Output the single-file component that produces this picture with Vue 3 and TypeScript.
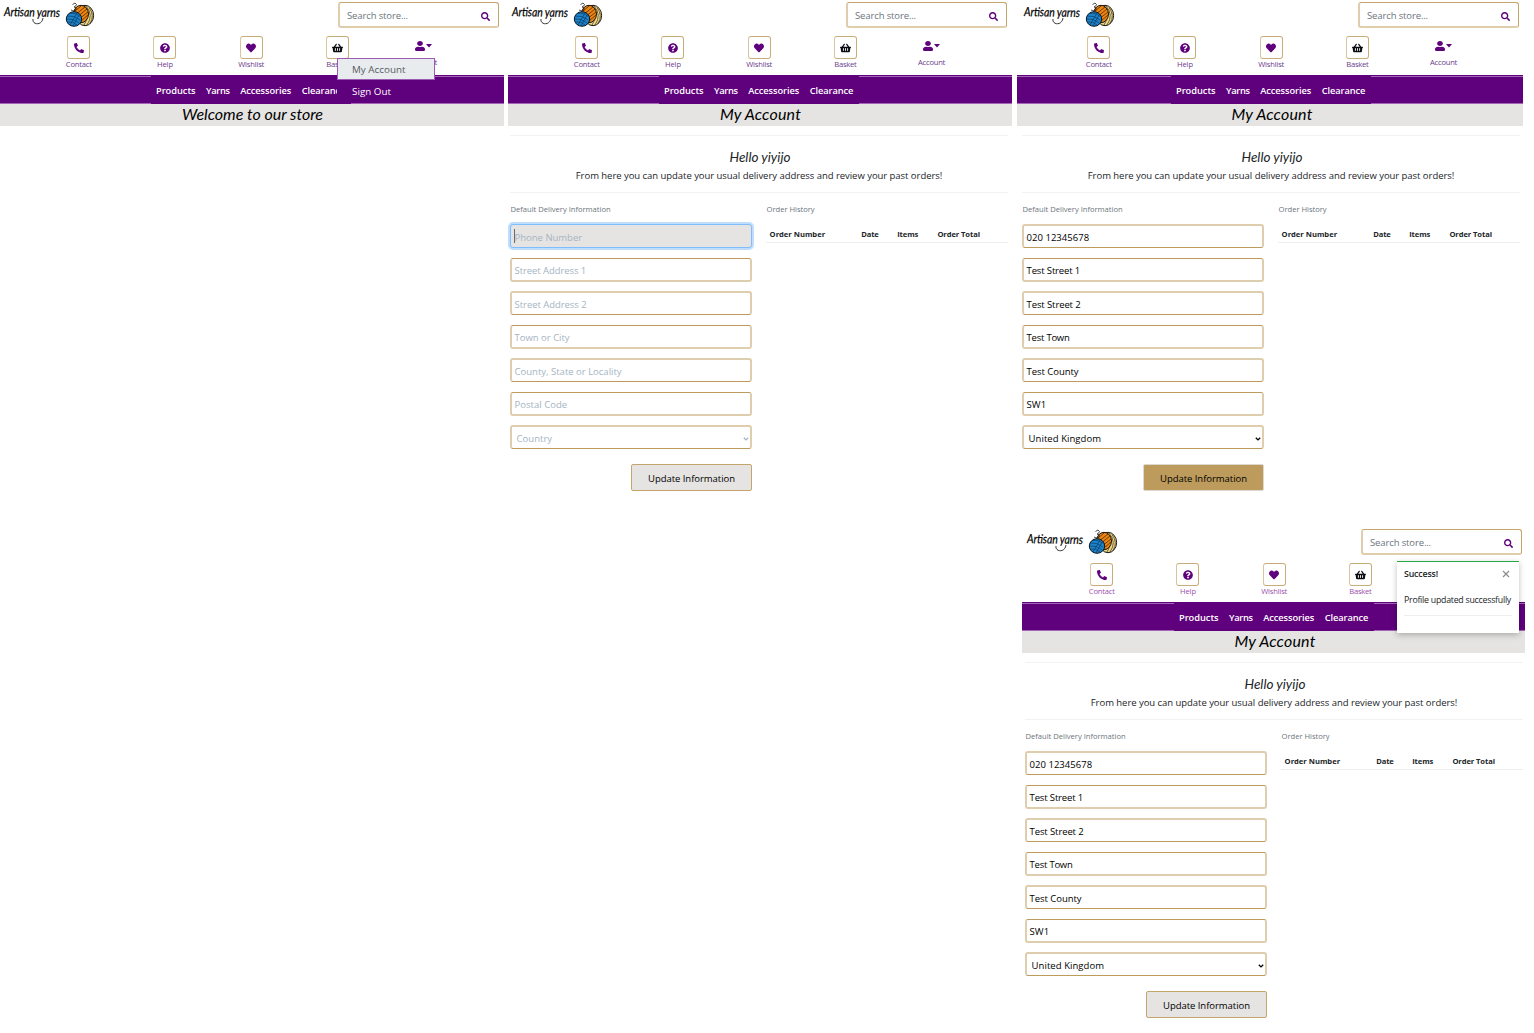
<script setup lang="ts">
import type { Directive } from 'vue'

interface Field { hint: string; value: string; edge: 'sharp-top' | 'sharp-bottom'; hw: number; vw: number }
interface Panel {
  id: string
  title: string
  menu?: boolean
  profile?: boolean
  filled?: boolean
  hover?: boolean
  toast?: boolean
}

// Spreads the letters of an element so its text is exactly `value` px wide.
const vFit: Directive<HTMLElement, number> = {
  mounted(el, { value }) {
    const range = document.createRange()
    range.selectNodeContents(el)
    const width = range.getBoundingClientRect().width
    const count = (el.textContent ?? '').trim().length
    el.style.letterSpacing = `${((value - width) / count).toFixed(4)}px`
  },
}

const panels: Panel[] = [
  { id: 'home', title: 'Welcome to our store', menu: true },
  { id: 'empty', title: 'My Account', profile: true },
  { id: 'filled', title: 'My Account', profile: true, filled: true, hover: true },
  { id: 'saved', title: 'My Account', profile: true, filled: true, toast: true },
]

const nav = [
  { name: 'Products', w: 39.5 },
  { name: 'Yarns', w: 23.5 },
  { name: 'Accessories', w: 51 },
  { name: 'Clearance', w: 43.5 },
]

const tools = [
  { name: 'Contact', w: 26, color: '#5f007c', d: 'M493.4 24.6l-104-24c-11.3-2.6-22.900 3.300-27.500 13.900l-48 112c-4.200 9.800-1.400 21.300 6.900 28l60.600 49.600c-36 76.700-98.900 140.500-177.200 177.200l-49.600-60.600c-6.800-8.300-18.200-11.100-28-6.900l-112 48C3.900 366.500-2 378.100.6 389.400l24 104C27.100 504.200 36.700 512 48 512c256.100 0 464-207.500 464-464 0-11.200-7.700-20.900-18.600-23.400z', flip: true },
  { name: 'Help', w: 16, color: '#5f007c', d: 'M504 256c0 136.997-111.043 248-248 248S8 392.997 8 256C8 119.083 119.043 8 256 8s248 111.083 248 248zM262.655 90c-54.497 0-89.255 22.957-116.549 63.758-3.536 5.286-2.353 12.415 2.715 16.258l34.699 26.310c5.205 3.947 12.621 3.008 16.665-2.122 17.864-22.658 30.113-35.797 57.303-35.797 20.429 0 45.698 13.148 45.698 32.958 0 14.976-12.363 22.667-32.534 33.976C247.128 238.528 216 254.941 216 296v4c0 6.627 5.373 12 12 12h56c6.627 0 12-5.373 12-12v-1.333c0-28.462 83.186-29.647 83.186-106.667 0-58.002-60.165-102-116.531-102zM256 338c-25.365 0-46 20.635-46 46 0 25.364 20.635 46 46 46s46-20.636 46-46c0-25.365-20.635-46-46-46z' },
  { name: 'Wishlist', w: 26, color: '#5f007c', d: 'M462.300 62.600C407.500 15.900 326 24.300 275.700 76.200L256 96.500l-19.700-20.300C186.100 24.300 104.500 15.900 49.700 62.600c-62.800 53.600-66.100 149.800-9.900 207.900l193.500 199.800c12.500 12.900 32.800 12.900 45.300 0l193.500-199.800c56.300-58.100 53-154.300-9.800-207.900z' },
  { name: 'Basket', w: 22, color: '#0b0b12', d: 'M576 216v16c0 13.255-10.745 24-24 24h-8l-26.113 182.788C514.509 462.435 494.257 480 470.370 480H105.630c-23.887 0-44.139-17.565-47.518-41.212L32 256h-8c-13.255 0-24-10.745-24-24v-16c0-13.255 10.745-24 24-24h67.341l106.780-146.821c10.395-14.292 30.407-17.453 44.701-7.058 14.293 10.395 17.453 30.408 7.058 44.701L170.477 192h235.046L326.120 82.821c-10.395-14.292-7.234-34.306 7.059-44.701 14.291-10.395 34.306-7.235 44.701 7.058L484.659 192H552c13.255 0 24 10.745 24 24zM312 392V280c0-13.255-10.745-24-24-24s-24 10.745-24 24v112c0 13.255 10.745 24 24 24s24-10.745 24-24zm112 0V280c0-13.255-10.745-24-24-24s-24 10.745-24 24v112c0 13.255 10.745 24 24 24s24-10.745 24-24zm-224 0V280c0-13.255-10.745-24-24-24s-24 10.745-24 24v112c0 13.255 10.745 24 24 24s24-10.745 24-24z', wide: true },
]

const fields: Field[] = [
  { hint: 'Phone Number', value: '020 12345678', edge: 'sharp-bottom', hw: 67.5, vw: 62.5 },
  { hint: 'Street Address 1', value: 'Test Street 1', edge: 'sharp-top', hw: 71.5, vw: 53.5 },
  { hint: 'Street Address 2', value: 'Test Street 2', edge: 'sharp-bottom', hw: 72, vw: 54 },
  { hint: 'Town or City', value: 'Test Town', edge: 'sharp-top', hw: 55, vw: 43 },
  { hint: 'County, State or Locality', value: 'Test County', edge: 'sharp-bottom', hw: 107, vw: 52 },
  { hint: 'Postal Code', value: 'SW1', edge: 'sharp-top', hw: 52.5, vw: 19.5 },
]

const columns = [
  { name: 'Order Number', w: 55.5, col: 91.6 },
  { name: 'Date', w: 17.5, col: 36 },
  { name: 'Items', w: 21, col: 40.2 },
  { name: 'Order Total', w: 42.5, col: 70 },
]
</script>

<template>
  <main class="board">
    <section v-for="p in panels" :key="p.id" class="panel" :class="p.id">
      <header class="top">
        <svg class="logo" viewBox="0 0 92 26" width="92" height="26">
          <g transform="rotate(1 28 12)">
            <text x="1" y="14.500" textLength="56" lengthAdjust="spacingAndGlyphs" class="brand">Artisan yarns</text>
          </g>
          <path d="M30 17c-1 6 9 7 10-1" fill="none" stroke="#222" stroke-width=".9" />
          <ellipse cx="82" cy="13.500" rx="8.600" ry="10.200" fill="#f0d98a" stroke="#15130c" stroke-width="1" />
          <path d="M83 4q8 9 1 19M86 5.500q6 8 1 16M80 4q8 9 1 19" fill="none" stroke="#3a331c" stroke-width=".7" />
          <ellipse cx="78" cy="12" rx="7.500" ry="8.700" fill="#ee8511" stroke="#15130c" stroke-width="1" />
          <path d="M71 10l7-6M72 13l10-8M74 15l10-8M76 17l9-7M78 19l7-6" stroke="#4d2704" stroke-width=".8" />
          <ellipse cx="71" cy="17" rx="7.700" ry="7.300" fill="#1e83c9" stroke="#0b1520" stroke-width="1" />
          <path d="M64 14q7-1 13 4M64 17q6-1 12 4M65 20q5-1 9 3M66 11.500q7-1 11 3M67 23l7-12M70 24l6-11" fill="none" stroke="#093b66" stroke-width=".7" />
          <path d="M69.500 2.500q3-3 4 0q-.5 2-2.500 2.500q3 0 2 3q-3 2-5 0" fill="none" stroke="#222" stroke-width=".8" />
        </svg>
        <div class="search">
          <span v-fit="61">Search store...</span>
          <svg viewBox="0 0 512 512" width="9" height="9"><path fill="#5f007c" d="M505 442.700L405.300 343c-4.500-4.500-10.600-7-17-7H372c27.600-35.300 44-79.700 44-128C416 93.100 322.900 0 208 0S0 93.100 0 208s93.100 208 208 208c48.300 0 92.700-16.400 128-44v16.300c0 6.400 2.500 12.500 7 17l99.700 99.700c9.400 9.400 24.600 9.400 33.900 0l28.300-28.300c9.400-9.400 9.400-24.600.1-34zM208 336c-70.700 0-128-57.200-128-128 0-70.700 57.200-128 128-128 70.700 0 128 57.200 128 128 0 70.700-57.200 128-128 128z" /></svg>
        </div>
      </header>

      <div class="tools">
        <div v-for="t in tools" :key="t.name" class="tool">
          <div class="box">
            <svg :viewBox="t.wide ? '0 0 576 512' : '0 0 512 512'" :width="t.wide ? 11 : 10" height="10" :class="{ flip: t.flip }">
              <path :d="t.d" :fill="t.color" />
            </svg>
          </div>
          <span class="caption" v-fit="t.w">{{ t.name }}</span>
        </div>
        <div class="tool account">
          <div class="who">
            <svg viewBox="0 0 448 512" width="10" height="10" preserveAspectRatio="none"><path fill="#5f007c" d="M224 256c70.700 0 128-57.300 128-128S294.700 0 224 0 96 57.300 96 128s57.300 128 128 128zm89.600 32h-16.700c-22.200 10.200-46.900 16-72.900 16s-50.600-5.800-72.900-16h-16.700C60.200 288 0 348.200 0 422.400V464c0 26.500 21.500 48 48 48h352c26.500 0 48-21.500 48-48v-41.600c0-74.200-60.200-134.400-134.400-134.400z" /></svg>
            <svg viewBox="0 0 6 4" width="6" height="4"><path fill="#5f007c" d="M0 0h6L3 3.400z" /></svg>
          </div>
          <span class="caption" v-fit="27">Account</span>
        </div>
      </div>

      <nav class="nav">
        <i class="rule left"></i>
        <ul><li v-for="n in nav" :key="n.name"><span v-fit="n.w">{{ n.name }}</span></li></ul>
        <i class="rule"></i>
      </nav>
      <h1 class="title"><span v-fit="p.menu ? 141 : 81">{{ p.title }}</span></h1>

      <div v-if="p.menu" class="menu">
        <div class="item active"><span v-fit="53.5">My Account</span></div>
        <div class="item"><span v-fit="39">Sign Out</span></div>
      </div>

      <div v-if="p.profile" class="profile">
        <div class="hello">
          <h2><span v-fit="61">Hello yiyijo</span></h2>
          <p><span v-fit="366.500">From here you can update your usual delivery address and review your past orders!</span></p>
        </div>
        <div class="columns">
          <div class="form">
            <div class="label"><span v-fit="100">Default Delivery Information</span></div>
            <div
              v-for="(f, i) in fields"
              :key="f.hint"
              class="field"
              :class="[f.edge, { hint: !p.filled, focus: i === 0 && !p.filled }]"
            >
              <span v-fit="p.filled ? f.vw : f.hw">{{ p.filled ? f.value : f.hint }}</span>
            </div>
            <div class="field select sharp-bottom" :class="{ hint: !p.filled }">
              <span v-fit="p.filled ? 72.5 : 35.5">{{ p.filled ? 'United Kingdom' : 'Country' }}</span>
              <svg viewBox="0 0 6 4" width="6" height="4"><path d="M.8.700L3 2.900 5.200.700" fill="none" stroke="currentColor" stroke-width="1.300" /></svg>
            </div>
            <div class="button" :class="{ hover: p.hover }"><span v-fit="87">Update Information</span></div>
          </div>
          <div class="history">
            <div class="label"><span v-fit="48">Order History</span></div>
            <div class="thead">
              <div v-for="c in columns" :key="c.name" class="th" :style="{ width: c.col + 'px' }"><span v-fit="c.w">{{ c.name }}</span></div>
            </div>
          </div>
        </div>
      </div>

      <div v-if="p.toast" class="toast">
        <div class="toast-head">
          <span v-fit="34">Success!</span>
          <svg viewBox="0 0 8 8" width="8" height="8"><path d="M1 1l6 6M7 1L1 7" stroke="#8b8b8b" stroke-width="1.200" /></svg>
        </div>
        <div class="toast-body"><span v-fit="107">Profile updated successfully</span></div>
      </div>
    </section>
  </main>
</template>

<style>
body { background: #fff; }
</style>

<style scoped>
.board {
  width: 1534px;
  height: 1033px;
  overflow: hidden;
  display: grid;
  grid-template-columns: 508px 512px 514px;
  grid-template-rows: 527px 506px;
  font-family: "Open Sans", "Noto Sans", sans-serif;
  font-size: 9.5px;
  line-height: 12px;
  color: #212529;
  white-space: nowrap;
}
.board * { box-sizing: border-box; }
.panel { position: relative; width: 504px; }
.saved { grid-column: 3; margin-left: 3px; }
.top { display: flex; justify-content: space-between; height: 36px; padding: 2px 5px 0 3px; }
.logo { display: block; }
.brand { font: italic 400 12.500px "Lato", sans-serif; fill: #000; stroke: #000; stroke-width: .25px; }
.search {
  display: flex; align-items: center; justify-content: space-between;
  width: 161px; height: 26px; padding: 2px 8.500px 0 7px;
  border: 1px solid #c4a56c; border-left: 2px solid #dfcdab; border-bottom: 2px solid #dfcdab; border-radius: 3px;
  color: #6c757d;
}
.search svg { margin-top: 1px; }
.tools { display: flex; height: 39px; padding-left: 35.700px; }
.tool { display: flex; flex-direction: column; align-items: center; width: 86.200px; }
.box {
  display: flex; align-items: center; justify-content: center;
  width: 23px; height: 23px; border: 1px solid #c9ad79; border-left-color: #d9c49c; border-radius: 3px;
}
.box svg, .who svg { display: block; }
.flip { transform: scaleX(-1); }
.caption { font-size: 7.600px; line-height: 10px; color: #6b3d8c; }
.saved .caption { color: #9a50ad; }
.who { display: flex; align-items: center; gap: 1px; height: 21px; padding-bottom: 1px; }
.nav { display: flex; height: 29px; background: #5f007c; overflow: hidden; }
.rule { flex: none; width: 155px; margin-top: 1px; height: 28px; border: solid #a366b5; border-width: 1px 0; }
.rule.left { width: 151px; }
.nav ul {
  display: flex; gap: 10.600px; flex: none; width: 200px; margin: 0; padding: 10px 0 0 5px; list-style: none;
  color: #fff; font-size: 9.300px; font-weight: 600;
}
.title {
  display: flex; justify-content: center; height: 22px; margin: 0; background: #e5e4e2;
  font: italic 400 16px/20px "Lato", sans-serif; color: #000; padding-left: 1px;
}
.filled .nav, .filled .title { margin-left: -3px; margin-right: 1px; }
.filled .rule.left { width: 154px; }
.filled .title { padding-left: 4px; }
.saved .nav, .saved .title { margin-left: -1px; margin-right: 2px; }
.saved .rule.left { width: 152px; }
.saved .title { padding-left: 3px; }
.menu { position: absolute; left: 337px; top: 58px; width: 98px; height: 45px; background: #5f007c; color: #fff; font-size: 9.800px; }
.item { height: 22px; padding: 6px 0 0 15px; }
.item.active { background: #e9ecef; border: 1px solid #9c5cb4; padding: 5px 0 0 14px; color: #565b60; }
.profile { padding: 9px 4px 0 2px; }
.hello { height: 58px; border: solid #f2f2f2; border-width: 1px 0; text-align: center; }
.hello h2 { margin: 11px 0 0; font: italic 400 13.500px/20px "Lato", sans-serif; padding-left: 2px; }
.hello p { margin: 2px 0 0; line-height: 14px; }
.columns { display: flex; justify-content: space-between; }
.form, .history { width: 242px; }
.label { height: 31px; padding: 10px 0 0 .6px; font-size: 7.600px; color: #6c757d; }
.field {
  position: relative;
  display: flex; align-items: center; height: 24px; margin-bottom: 9.500px; padding: 3px 0 0 2.600px;
  border: 2px solid #dfceae; border-radius: 3px; color: #000;
}
.sharp-top { border-top: 1px solid #bd9b5c; }
.sharp-bottom { border-bottom: 1px solid #bd9b5c; }
.hint { color: #a5b4c2; }
.focus { background: #e5e4e2; border: 1px solid #80bdff; padding-left: 3.600px; box-shadow: 0 0 0 2px #bfdeff; }
.focus::before { content: ""; position: absolute; left: 3px; top: 4px; width: 1px; height: 14px; background: #6b6b6b; }
.select { justify-content: space-between; padding: 2px 1px 0 4.600px; }
.button {
  display: flex; align-items: center; justify-content: center; width: 121px; height: 27px; margin: 14.900px 0 0 auto;
  padding-top: 3.500px; background: #e5e4e2; border: 1px solid #c4a66c; border-radius: 2px; color: #000;
}
.button.hover { background: #bd9b5c; border-color: #dcd8d2; }
.thead { display: flex; height: 19px; padding: 4px 0 0 3.600px; border-bottom: 1px solid #ededee; font-size: 7.600px; font-weight: 700; }
.th { flex: none; }
.toast {
  position: absolute; left: 374px; top: 34px; width: 122px; height: 72px; padding: 1px 7px 0; background: #fff;
  border-top: 1px solid #28a745; box-shadow: 0 2px 6px rgba(0, 0, 0, .25); font-size: 8.800px;
}
.toast-head { display: flex; justify-content: space-between; align-items: center; height: 22px; padding-right: 2px; font-weight: 600; }
.toast-body { height: 31px; padding-top: 9px; border-bottom: 1px solid #eee; }
</style>
